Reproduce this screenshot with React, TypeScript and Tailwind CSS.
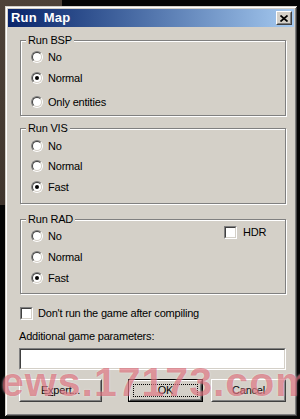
const ui = "font-['Liberation_Sans',Arial,sans-serif] text-[11px] tracking-[-0.2px] text-black";

function Radio({ checked }: { checked?: boolean }) {
  return (
    <span className="flex h-[12px] w-[12px] shrink-0 items-center justify-center rounded-full border border-t-[#808080] border-l-[#808080] border-r-white border-b-white">
      <span className="flex h-[10px] w-[10px] items-center justify-center rounded-full border border-t-[#404040] border-l-[#404040] border-r-[#d4d0c8] border-b-[#d4d0c8] bg-white">
        {checked && <span className="h-[4px] w-[4px] rounded-full bg-black" />}
      </span>
    </span>
  );
}

function Check() {
  return (
    <span className="block h-[13px] w-[13px] shrink-0 border border-t-[#808080] border-l-[#808080] border-r-white border-b-white">
      <span className="block h-full w-full border border-t-[#404040] border-l-[#404040] border-r-[#d4d0c8] border-b-[#d4d0c8] bg-white" />
    </span>
  );
}

function Option({ label, checked, className }: { label: string; checked?: boolean; className: string }) {
  return (
    <div className={"flex h-[12px] items-center gap-[5px] " + className}>
      <Radio checked={checked} />
      <span className="leading-[13px]">{label}</span>
    </div>
  );
}

function Legend({ title }: { title: string }) {
  return <div className="-mt-[7px] ml-[5px] w-fit bg-[#d4d0c8] px-[2px] leading-[13px]">{title}</div>;
}

const groupBox = "ml-[1px] w-[266px] border border-[#808080] shadow-[inset_1px_1px_0_#fff,1px_1px_0_#fff]";
const raised = "border border-t-white border-l-white border-r-[#404040] border-b-[#404040]";
const raisedInner = "border border-t-[#d4d0c8] border-l-[#d4d0c8] border-r-[#808080] border-b-[#808080]";

export default function App() {
  return (
    <div className="relative h-[419px] w-[300px] overflow-hidden bg-[linear-gradient(90deg,transparent_62px,#050505_62px),linear-gradient(180deg,#4e4238_0,#3f352d_205px,#050505_205px)] pl-[5px] pt-[6px]">
      <div className={"h-[410px] w-[292px] bg-[#d4d0c8] p-[3px] shadow-[inset_1px_1px_0_#d4d0c8,inset_-1px_-1px_0_#404040,inset_2px_2px_0_#ffffff,inset_-2px_-2px_0_#808080] " + ui}>
        <div className="flex h-[18px] items-center bg-gradient-to-r from-[#0a246a] to-[#a6caf0] pl-[3px] pr-[2px]">
          <span className="text-[13px] font-bold tracking-[0.2px] text-white [word-spacing:3px]">Run Map</span>
          <div className={"ml-auto h-[14px] w-[16px] bg-[#d4d0c8] " + raised}>
            <div className={"flex h-full w-full items-center justify-center " + raisedInner}>
              <svg width="8" height="7" viewBox="0 0 8 7">
                <path d="M0.5 0.5 L7.5 6.5 M7.5 0.5 L0.5 6.5" stroke="#000" strokeWidth="1.7" />
              </svg>
            </div>
          </div>
        </div>

        <div className="pl-[11px] pt-[13px]">
          <div className={"h-[76px] " + groupBox}>
            <Legend title="Run BSP" />
            <div className="pl-[10px]">
              <Option label="No" className="mt-[4px]" />
              <Option label="Normal" checked className="mt-[9px]" />
              <Option label="Only entities" className="mt-[12px]" />
            </div>
          </div>

          <div className={"mt-[12px] h-[76px] " + groupBox}>
            <Legend title="Run VIS" />
            <div className="pl-[10px]">
              <Option label="No" className="mt-[5px]" />
              <Option label="Normal" className="mt-[8px]" />
              <Option label="Fast" checked className="mt-[9px]" />
            </div>
          </div>

          <div className={"mt-[15px] h-[75px] " + groupBox}>
            <Legend title="Run RAD" />
            <div className="flex pl-[10px]">
              <div className="w-[193px]">
                <Option label="No" className="mt-[4px]" />
                <Option label="Normal" className="mt-[9px]" />
                <Option label="Fast" checked className="mt-[9px]" />
              </div>
              <div className="flex h-[13px] items-center gap-[6px]">
                <Check />
                <span className="leading-[13px]">HDR</span>
              </div>
            </div>
          </div>

          <div className="ml-[1px] mt-[13px] flex h-[13px] items-center gap-[5px]">
            <Check />
            <span className="leading-[13px]">Don't run the game after compiling</span>
          </div>

          <div className="mt-[10px] leading-[13px]">Additional game parameters:</div>

          <div className="mt-[5px] h-[22px] w-[267px] border border-t-[#808080] border-l-[#808080] border-r-white border-b-white">
            <div className="h-full w-full border border-t-[#404040] border-l-[#404040] border-r-[#d4d0c8] border-b-[#d4d0c8] bg-white" />
          </div>

          <div className="mt-[9px] flex">
            <div className={"h-[23px] w-[83px] " + raised}>
              <div className={"flex h-full w-full items-center justify-center " + raisedInner}>
                E<span className="underline underline-offset-[1px]">x</span>pert...
              </div>
            </div>
            <div className="ml-[26px] h-[23px] w-[75px] border border-black">
              <div className={"h-full w-full " + raised}>
                <div className={"flex h-full w-full items-center justify-center p-[2px] " + raisedInner}>
                  <div className="flex h-full w-full items-center justify-center border border-dotted border-black">OK</div>
                </div>
              </div>
            </div>
            <div className={"ml-[8px] h-[23px] w-[75px] " + raised}>
              <div className={"flex h-full w-full items-center justify-center " + raisedInner}>Cancel</div>
            </div>
          </div>
        </div>
      </div>

      <div className="pointer-events-none absolute left-[-25px] top-[359px] whitespace-nowrap font-['Liberation_Sans',Arial,sans-serif] text-[41px] font-bold leading-[46px] tracking-[1px] text-[rgba(205,40,60,0.45)] [text-shadow:0_0_2px_rgba(255,255,255,0.5)]">
        news.17173.com
      </div>
    </div>
  );
}
